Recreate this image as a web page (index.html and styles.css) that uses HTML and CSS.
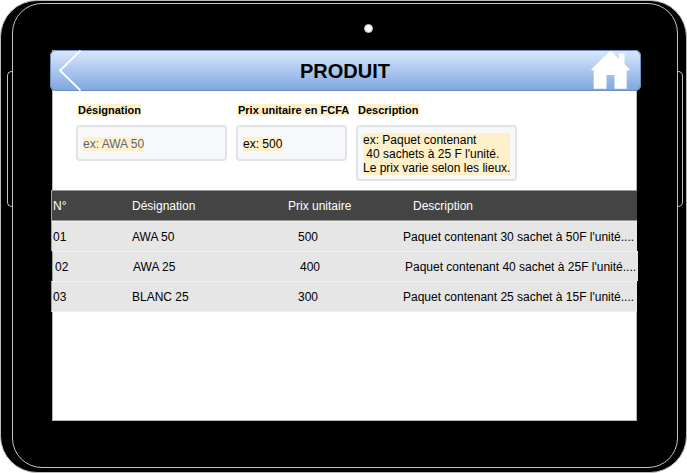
FILE: index.html
```
<!DOCTYPE html>
<html lang="fr">
<head>
<meta charset="utf-8">
<title>Produit</title>
<link rel="stylesheet" href="styles.css">
</head>
<body>
<div class="tablet">
  <span class="bezel"></span>
  <span class="side side-left"></span>
  <span class="side side-right"></span>
  <span class="camera"></span>
  <main class="screen">
    <header class="bar">
      <svg class="back" width="24" height="41" viewBox="0 0 24 41"><path d="M22.5 .5 2 20.5l20.500 20" fill="none" stroke="#fff" stroke-width="1.800"/></svg>
      <h1>PRODUIT</h1>
      <svg class="home" width="40" height="41" viewBox="0 0 40 41"><path d="M20.500 .7 29 9V3.500h5.500v10.700L39.500 19v1.200H36.700V38.700H24.500V25h-8V38.700H3.700V20.200H1.500V19z" fill="#fff"/></svg>
    </header>
    <form class="form">
      <div class="group g1"><label><mark>Désignation</mark></label><div class="field muted"><mark>ex: AWA 50</mark></div></div>
      <div class="group g2"><label><mark>Prix unitaire en FCFA</mark></label><div class="field"><mark>ex: 500</mark></div></div>
      <div class="group g3"><label><mark>Description</mark></label><div class="field tall"><mark class="block">ex: Paquet contenant<br>&nbsp;40 sachets à 25 F l'unité.<br>Le prix varie selon les lieux.</mark></div></div>
    </form>
    <div class="table">
      <div class="row head"><span>N°</span><span>Désignation</span><span>Prix unitaire</span><span>Description</span></div>
      <div class="row"><span>01</span><span>AWA 50</span><span>500</span><span>Paquet contenant 30 sachet à 50F l'unité....</span></div>
      <div class="row shifted"><span>02</span><span>AWA 25</span><span>400</span><span>Paquet contenant 40 sachet à 25F l'unité....</span></div>
      <div class="row last"><span>03</span><span>BLANC 25</span><span>300</span><span>Paquet contenant 25 sachet à 15F l'unité....</span></div>
    </div>
  </main>
</div>
</body>
</html>
```
FILE: styles.css
```
* { box-sizing: border-box; }
body {
  margin: 0;
  background: #fff;
  color: #000;
  font: 12px/14px "Liberation Sans", Arial, sans-serif;
  overflow: hidden;
}
.tablet {
  position: relative;
  width: 687px;
  height: 473px;
  padding: 49px 49px 51px 51px;
  background: #000;
  border: 1px solid #bababa;
  border-radius: 37px;
}
.bezel {
  position: absolute;
  left: 11px;
  top: 2px;
  width: 666px;
  height: 465px;
  border: 1px solid #c4c4c4;
  border-radius: 30px;
}
.side {
  position: absolute;
  top: 70px;
  width: 6px;
  height: 136px;
  border: 1px solid #c4c4c4;
}
.side-left { left: 6px; border-right: 0; border-radius: 5px 0 0 5px; }
.side-right { left: 676px; border-left: 0; border-radius: 0 5px 5px 0; }
.camera {
  position: absolute;
  left: 363px;
  top: 23px;
  width: 9px;
  height: 9px;
  background: #fff;
  border: 1px solid #bababa;
  border-radius: 50%;
}
.screen {
  position: relative;
  width: 585px;
  height: 371px;
  background: #fff;
  box-shadow: inset 0 0 0 1px #b5b5b5;
}
.bar {
  display: flex;
  justify-content: space-between;
  align-items: center;
  width: 591px;
  height: 41px;
  margin-left: -2px;
  background: linear-gradient(#dae8fc, #7ea6e0);
  box-shadow: inset 0 0 0 1px #6c8ebf;
  border-radius: 6px;
}
.back { margin-left: 8px; }
.home { margin-right: 11px; }
h1 {
  margin: 0 0 0 18px;
  font-size: 20px;
  line-height: 24px;
}
.form {
  display: flex;
  align-items: flex-start;
  gap: 9px;
  height: 99px;
  padding: 13px 0 0 24px;
}
.g1 { width: 151px; }
.g2 { width: 111px; }
.g3 { width: 161px; }
label {
  display: block;
  height: 21px;
  padding-left: 2px;
  font-size: 11px;
  line-height: 13px;
  font-weight: bold;
  white-space: nowrap;
}
mark { background: #fff0cc; color: inherit; }
.field {
  display: flex;
  align-items: center;
  height: 36px;
  padding: 1px 0 0 5px;
  background: #f7f8fa;
  border: 2px solid #dfe3e8;
  border-radius: 4px;
  white-space: nowrap;
}
.muted { color: #596780; }
.tall { height: 56px; }
.block { display: block; }
.table { margin-left: -1px; }
.row {
  display: grid;
  grid-template-columns: 79px 166px 105px 1fr;
  align-items: center;
  width: 586px;
  height: 30px;
  padding-left: 1px;
  background: #e6e6e6;
  border-top: 1px solid #efefef;
  border-left: 1px solid #a0a0a0;
  white-space: nowrap;
}
.head {
  grid-template-columns: 79px 156px 125px 1fr;
  height: 31px;
  padding-top: 1px;
  background: #444;
  color: #fff;
  border-top: 1px solid #999c99;
  border-bottom: 1px solid #999c99;
}
.shifted {
  grid-template-columns: 78px 167px 105px 1fr;
  width: 586px;
  margin-left: 1px;
  padding-left: 2px;
}
.last {
  height: 31px;
  border-bottom: 1px solid #efefef;
}
```
